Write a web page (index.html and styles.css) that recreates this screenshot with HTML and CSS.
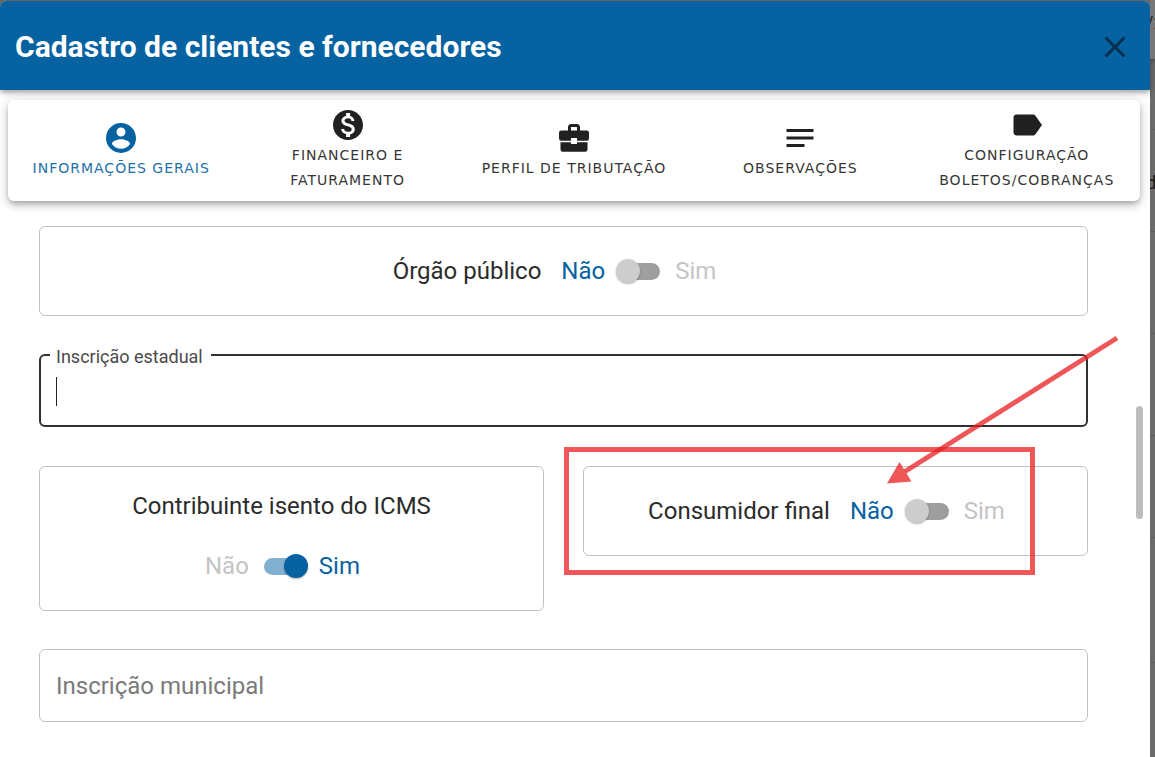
FILE: index.html
```html
<!DOCTYPE html>
<html lang="pt-BR">
<head>
	<meta charset="utf-8">
	<title>Cadastro de clientes e fornecedores</title>
	<link rel="stylesheet" href="styles.css">
</head>
<body>
	<div class="dialog">
		<header class="dialog-header">
			<h1>Cadastro de clientes e fornecedores</h1>
			<button type="button" class="close" aria-label="Fechar">
				<svg class="icon" viewBox="0 0 24 24"><path d="M19 6.41 17.59 5 12 10.59 6.41 5 5 6.41 10.59 12 5 17.59 6.41 19 12 13.41 17.59 19 19 17.59 13.41 12z"/></svg>
			</button>
		</header>
		<nav class="tabs">
			<a href="#" class="tab active">
				<svg class="icon" viewBox="0 0 24 24"><path d="M12 19.2C9.5 19.2 7.29 17.92 6 16C6.03 14 10 12.9 12 12.9C14 12.9 17.97 14 18 16C16.71 17.92 14.5 19.2 12 19.2M12 5A3 3 0 0 1 15 8A3 3 0 0 1 12 11A3 3 0 0 1 9 8A3 3 0 0 1 12 5M12 2A10 10 0 0 0 2 12A10 10 0 0 0 12 22A10 10 0 0 0 22 12C22 6.47 17.5 2 12 2Z"/></svg>
				<span>Informações gerais</span>
			</a>
			<a href="#" class="tab">
				<svg class="icon" viewBox="0 0 24 24"><path d="M12 2C6.48 2 2 6.48 2 12s4.48 10 10 10 10-4.48 10-10S17.52 2 12 2zm1.41 16.09V20h-2.67v-1.93c-1.71-.36-3.16-1.46-3.27-3.4h1.96c.1 1.05.82 1.87 2.65 1.87 1.96 0 2.4-.98 2.4-1.59 0-.83-.44-1.61-2.67-2.14-2.48-.6-4.18-1.62-4.18-3.67 0-1.72 1.39-2.84 3.11-3.21V4h2.67v1.95c1.86.45 2.79 1.86 2.85 3.39H14.3c-.05-1.11-.64-1.87-2.22-1.87-1.5 0-2.4.68-2.4 1.64 0 .84.65 1.39 2.67 1.91s4.18 1.39 4.18 3.91c-.01 1.83-1.38 2.83-3.12 3.16z"/></svg>
				<span>Financeiro e<br>faturamento</span>
			</a>
			<a href="#" class="tab">
				<svg class="icon" viewBox="0 0 24 24"><path d="M8 7V5Q8 2.7 10.3 2.7H13.7Q16 2.7 16 5V7H20.5Q22 7 22 8.5V12.3Q22 13.8 20.5 13.8H14V12H10V13.8H3.5Q2 13.8 2 12.3V8.5Q2 7 3.5 7ZM10 7H14V4.7H10ZM3 14.8H10V16H14V14.8H21V19.6Q21 21.1 19.5 21.1H4.5Q3 21.1 3 19.6Z"/></svg>
				<span>Perfil de tributação</span>
			</a>
			<a href="#" class="tab">
				<svg class="icon" viewBox="0 0 24 24"><path d="M3 18h12v-2H3v2zM3 6v2h18V6H3zm0 7h18v-2H3v2z"/></svg>
				<span>Observações</span>
			</a>
			<a href="#" class="tab">
				<svg class="icon" viewBox="0 0 24 24"><path d="M17.63 5.84C17.27 5.33 16.67 5 16 5L5 5.01C3.9 5.01 3 5.9 3 7v10c0 1.1.9 1.99 2 1.99L16 19c.67 0 1.27-.33 1.63-.84L22 12l-4.37-6.16z"/></svg>
				<span>Configuração<br>boletos/cobranças</span>
			</a>
		</nav>
		<div class="dialog-body">
			<form class="form">
				<div class="card">
					<label class="card-label" for="orgao">Órgão público</label>
					<div class="toggle">
						<span class="off">Não</span>
						<input type="checkbox" class="switch" id="orgao">
						<span class="on">Sim</span>
					</div>
				</div>
				<fieldset class="field focused">
					<legend><label for="estadual">Inscrição estadual</label></legend>
					<input type="text" id="estadual">
				</fieldset>
				<div class="row">
					<div class="card">
						<label class="card-label" for="icms">Contribuinte isento do ICMS</label>
						<div class="toggle">
							<span class="off">Não</span>
							<input type="checkbox" class="switch" id="icms" checked>
							<span class="on">Sim</span>
						</div>
					</div>
					<div class="card">
						<label class="card-label" for="consumidor">Consumidor final</label>
						<div class="toggle">
							<span class="off">Não</span>
							<input type="checkbox" class="switch" id="consumidor">
							<span class="on">Sim</span>
						</div>
					</div>
				</div>
				<div class="field">
					<input type="text" id="municipal" placeholder="Inscrição municipal" aria-label="Inscrição municipal">
				</div>
			</form>
			<div class="scroll-thumb"></div>
		</div>
	</div>
	<!-- page behind the dialog -->
	<div class="behind">
		<div class="behind-bar">/2</div>
		<div class="behind-row"></div>
		<div class="behind-row">d</div>
		<div class="behind-row"></div>
		<div class="behind-row"></div>
		<div class="behind-row"></div>
		<div class="behind-row tall"></div>
	</div>
	<svg class="marks" width="1155" height="757" viewBox="0 0 1155 757">
		<rect x="566.5" y="449.5" width="466" height="123"/>
		<path class="shaft" d="M1117 338 905 471.500"/>
		<path class="head" d="M887 483.500 899.500 462 911.500 481.500Z"/>
	</svg>
</body>
</html>
```

FILE: styles.css
```css
body {
	margin: 0;
	display: flex;
	height: 100vh;
	overflow: hidden;
	position: relative;
	background: #6b6b6b;
	font-family: Roboto, sans-serif;
	font-size: 24px;
	color: #2b2b2b;
}
.icon {
	display: block;
	width: 36px;
	height: 36px;
	fill: currentColor;
}

/* dialog */
.dialog {
	flex: 1;
	display: flex;
	flex-direction: column;
	margin-top: 1px;
	border-radius: 6px 6px 0 0;
	background: #fff;
}
.dialog-header {
	display: flex;
	align-items: center;
	justify-content: space-between;
	box-sizing: border-box;
	height: 89px;
	padding: 2px 17px 0 15px;
	border-radius: 6px 6px 0 0;
	background: #0662a1;
	color: #fff;
	box-shadow: 0 2px 4px -1px rgba(0,0,0,0.2), 0 4px 5px rgba(0,0,0,0.14), 0 1px 10px rgba(0,0,0,0.12);
}
.dialog-header h1 {
	margin: 0;
	font-size: 30px;
	font-weight: 700;
}
.close {
	padding: 0;
	border: none;
	background: none;
	color: #05304f;
	cursor: pointer;
}

/* tabs */
.tabs {
	display: grid;
	grid-template-columns: repeat(5, 1fr);
	height: 101px;
	margin: 10px 10px 0 8px;
	border-radius: 6px;
	background: #fff;
	box-shadow: 0 3px 5px -1px rgba(0,0,0,0.2), 0 5px 8px rgba(0,0,0,0.14), 0 1px 14px rgba(0,0,0,0.12);
	position: relative;
}
.tab {
	display: flex;
	flex-direction: column;
	align-items: center;
	justify-content: center;
	padding-bottom: 1px;
	font-family: "DejaVu Sans", sans-serif;
	font-size: 14px;
	line-height: 25px;
	letter-spacing: 1px;
	text-align: center;
	text-transform: uppercase;
	text-decoration: none;
	white-space: nowrap;
	color: #212121;
}
.tab.active {
	color: #0662a1;
}
.tab span {
	opacity: 0.9;
}

/* form */
.dialog-body {
	flex: 1;
	display: flex;
	padding: 25px 7px 0 39px;
}
.form {
	flex: 1;
	display: flex;
	flex-direction: column;
	gap: 38px;
	margin-right: 48px;
}
.row {
	display: grid;
	grid-template-columns: 1fr 1fr;
	align-items: start;
	gap: 39px;
}
.card {
	display: flex;
	flex-wrap: wrap;
	align-items: center;
	justify-content: center;
	row-gap: 5px;
	padding: 14px;
	border: 1px solid #c2c2c2;
	border-radius: 6px;
}
.card-label {
	margin-right: 20px;
	line-height: 50px;
}
.toggle {
	display: flex;
	align-items: center;
	gap: 11px;
	height: 60px;
	margin-right: 18px;
	color: #0662a1;
}
.toggle:has(:checked) .off,
.switch:not(:checked) + .on {
	color: #c4c4c4;
}

/* switch */
.switch {
	appearance: none;
	display: grid;
	align-items: center;
	width: 48px;
	height: 24px;
	margin: 0;
	cursor: pointer;
}
.switch::before,
.switch::after {
	content: "";
	grid-area: 1 / 1;
}
.switch::before {
	height: 17px;
	margin: 0 4px;
	border-radius: 9px;
	background: #9e9e9e;
}
.switch::after {
	width: 24px;
	height: 24px;
	border-radius: 50%;
	background: #cdcdcd;
	box-shadow: 0 1px 2px rgba(0,0,0,0.3);
}
.switch:checked::before {
	background: #82b0d0;
}
.switch:checked::after {
	justify-self: end;
	background: #0662a1;
}

/* text fields */
.field {
	margin: 0;
	padding: 0;
	border: 1px solid #c2c2c2;
	border-radius: 6px;
}
.field input {
	display: block;
	box-sizing: border-box;
	width: 100%;
	height: 71px;
	padding: 0 16px;
	border: none;
	outline: none;
	background: none;
	font: inherit;
	color: inherit;
}
.field input::placeholder {
	color: #7a7a7a;
}
.field.focused {
	margin-bottom: 1px;
	border: 2px solid #303133;
}
.field.focused legend {
	height: 2px;
	margin-left: 9px;
	padding: 0 8px 0 6px;
	font-size: 18px;
	line-height: 5px;
	color: #4a4a4a;
}
.field.focused input {
	height: 69px;
	background: linear-gradient(#212121, #212121) 15px 21px / 1px 29px no-repeat;
}
.scroll-thumb {
	width: 7px;
	height: 113px;
	margin-top: 180px;
	border-radius: 4px;
	background: #bdbdbd;
}

/* page behind */
.behind {
	width: 5px;
	overflow: hidden;
	font-size: 18px;
	text-indent: -4px;
	color: #1c1c1c;
}
.behind-bar {
	height: 59px;
	line-height: 46px;
	background: #777;
	box-shadow: 0 2px 4px rgba(0,0,0,0.4);
}
.behind-row {
	height: 101px;
	line-height: 106px;
	border-bottom: 1px solid #5c5c5c;
}
.behind-row:nth-child(2) {
	height: 70px;
}
.behind-row.tall {
	height: 124px;
}

/* red marks */
.marks {
	position: absolute;
	top: 0;
	left: 0;
	fill: none;
	stroke: #e91e20;
	stroke-width: 5;
	pointer-events: none;
}
.marks > * {
	opacity: 0.75;
}
.marks .head {
	fill: #e91e20;
	stroke: none;
}
```
